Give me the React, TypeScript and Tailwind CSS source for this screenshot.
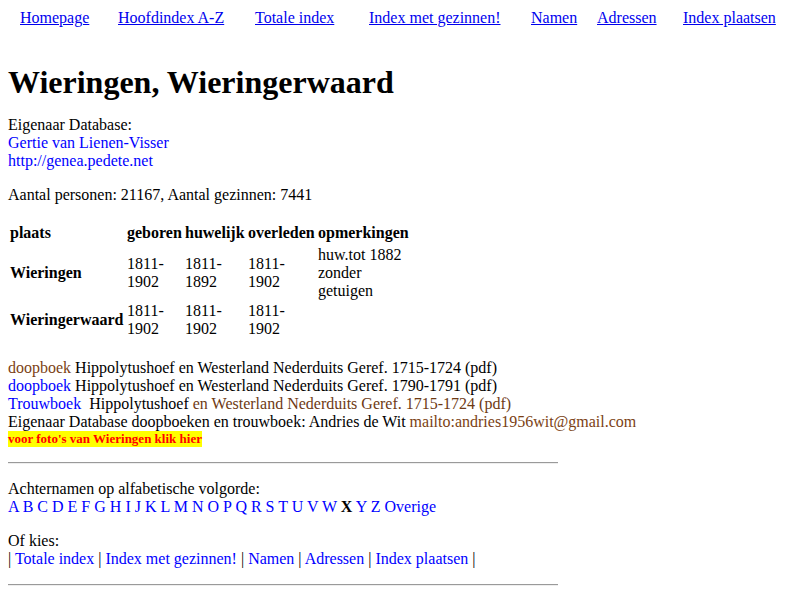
export default function App() {
  const letters = "ABCDEFGHIJKLMNOPQRSTUVW".split("");
  const nav: [string, string][] = [
    ["Homepage", "w-[98px]"],
    ["Hoofdindex A-Z", "w-[137px]"],
    ["Totale index", "w-[114px]"],
    ["Index met gezinnen!", "w-[162px]"],
    ["Namen", "w-[66px]"],
    ["Adressen", "w-[86px]"],
    ["Index plaatsen", "w-[100px]"],
  ];

  return (
    <div className="min-h-screen bg-white p-2 text-[16px] leading-[18px] text-black font-['Liberation_Serif','Times_New_Roman',serif]">
      {/* top menu */}
      <div className="flex pl-[12px] pt-[1px]">
        {nav.map(([label, w]) => (
          <span key={label} className={`${w} shrink-0`}>
            <a href="#" className="text-[#0000ee] underline">
              {label}
            </a>
          </span>
        ))}
      </div>

      <h1 className="mt-[37px] text-[32px] leading-[37px] font-bold">Wieringen, Wieringerwaard</h1>

      <p className="mt-[15px]">
        Eigenaar Database:
        <br />
        <a href="#" className="text-[#0000ff]">Gertie van Lienen-Visser</a>
        <br />
        <a href="#" className="text-[#0000ff]">http://genea.pedete.net</a>
      </p>

      <p className="mt-[16px]">Aantal personen: 21167, Aantal gezinnen: 7441</p>

      <table className="mt-[18px] table-fixed border-separate border-spacing-[2px] w-[404px]">
        <tbody>
          <tr className="font-bold">
            <td className="w-[115px] p-0 pb-[2px]">plaats</td>
            <td className="w-[56px] p-0 pb-[2px]">geboren</td>
            <td className="w-[61px] p-0 pb-[2px]">huwelijk</td>
            <td className="w-[68px] p-0 pb-[2px]">overleden</td>
            <td className="w-[92px] p-0 pb-[2px]">opmerkingen</td>
          </tr>
          <tr>
            <td className="p-0 font-bold">Wieringen</td>
            <td className="p-0">1811-1902</td>
            <td className="p-0">1811-1892</td>
            <td className="p-0">1811-1902</td>
            <td className="p-0">huw.tot 1882 zonder getuigen</td>
          </tr>
          <tr>
            <td className="p-0 font-bold">Wieringerwaard</td>
            <td className="p-0">1811-1902</td>
            <td className="p-0">1811-1902</td>
            <td className="p-0">1811-1902</td>
            <td className="p-0"></td>
          </tr>
        </tbody>
      </table>

      <div className="mt-[19px]">
        <a href="#" className="text-[#7b3f14]">doopboek</a> Hippolytushoef en Westerland Nederduits Geref. 1715-1724 (pdf)
        <br />
        <a href="#" className="text-[#0000ff]">doopboek</a> Hippolytushoef en Westerland Nederduits Geref. 1790-1791 (pdf)
        <br />
        <a href="#" className="text-[#0000ff]">Trouwboek</a>&nbsp; Hippolytushoef{" "}
        <span className="text-[#6e3a14]">en Westerland Nederduits Geref. 1715-1724 (pdf)</span>
        <br />
        Eigenaar Database doopboeken en trouwboek: Andries de Wit{" "}
        <a href="#" className="text-[#7b3f14]">mailto:andries1956wit@gmail.com</a>
      </div>
      <a href="#" className="block w-fit bg-[#ffff00] text-[#ff0000] text-[13px] leading-[16px] font-bold">
        voor foto's van Wieringen klik hier
      </a>

      <hr className="mt-[15px] w-[550px] border-0 border-t border-t-[#9a9a9a] border-b border-b-[#eeeeee]" />

      <p className="mt-[16px]">
        Achternamen op alfabetische volgorde:
        <br />
        {letters.map((l) => (
          <span key={l}>
            <a href="#" className="text-[#0000ff]">{l}</a>{" "}
          </span>
        ))}
        <b>X</b> <a href="#" className="text-[#0000ff]">Y</a> <a href="#" className="text-[#0000ff]">Z</a>{" "}
        <a href="#" className="text-[#0000ff]">Overige</a>
      </p>

      <p className="mt-[16px]">
        Of kies:
        <br />
        | <a href="#" className="text-[#0000ff]">Totale index</a> | <a href="#" className="text-[#0000ff]">Index met gezinnen!</a>{" "}
        | <a href="#" className="text-[#0000ff]">Namen</a> | <a href="#" className="text-[#0000ff]">Adressen</a>{" "}
        | <a href="#" className="text-[#0000ff]">Index plaatsen</a> |
      </p>

      <hr className="mt-[16px] w-[550px] border-0 border-t border-t-[#9a9a9a] border-b border-b-[#eeeeee]" />
    </div>
  );
}
